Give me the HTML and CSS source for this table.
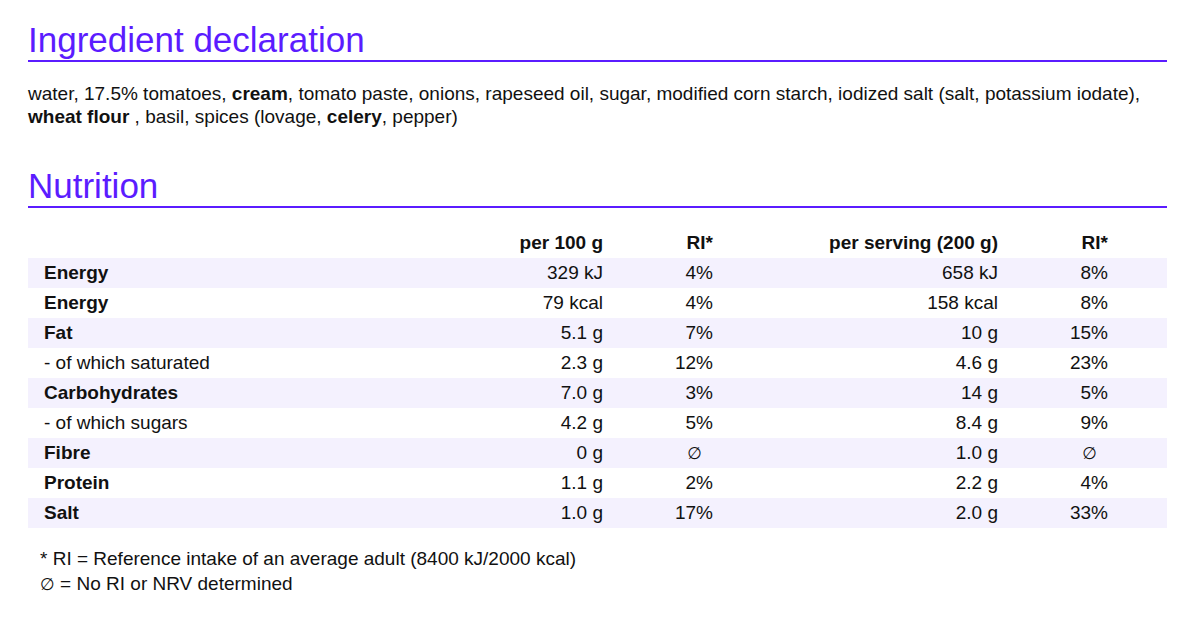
FILE: index.html
```html
<!DOCTYPE html>
<html lang="en">
<head>
<meta charset="utf-8">
<title>Product information</title>
<link rel="stylesheet" href="styles.css">
</head>
<body>
<main class="page">
  <section class="section">
    <h2 class="section-title">Ingredient declaration</h2>
    <p class="ingredients">water, 17.5% tomatoes, <b>cream</b>, tomato paste, onions, rapeseed oil, sugar, modified corn starch, iodized salt (salt, potassium iodate), <b>wheat flour</b> , basil, spices (lovage, <b>celery</b>, pepper)</p>
  </section>
  <section class="section">
    <h2 class="section-title">Nutrition</h2>
    <table class="nutrition">
      <colgroup>
        <col class="c-label">
        <col class="c-val">
        <col class="c-ri">
        <col class="c-val2">
        <col class="c-ri2">
      </colgroup>
      <thead>
        <tr><th></th><th>per 100 g</th><th>RI*</th><th>per serving (200 g)</th><th class="last">RI*</th></tr>
      </thead>
      <tbody>
        <tr class="main"><td>Energy</td><td>329 kJ</td><td>4%</td><td>658 kJ</td><td class="last">8%</td></tr>
        <tr class="main"><td>Energy</td><td>79 kcal</td><td>4%</td><td>158 kcal</td><td class="last">8%</td></tr>
        <tr class="main"><td>Fat</td><td>5.1 g</td><td>7%</td><td>10 g</td><td class="last">15%</td></tr>
        <tr><td>- of which saturated</td><td>2.3 g</td><td>12%</td><td>4.6 g</td><td class="last">23%</td></tr>
        <tr class="main"><td>Carbohydrates</td><td>7.0 g</td><td>3%</td><td>14 g</td><td class="last">5%</td></tr>
        <tr><td>- of which sugars</td><td>4.2 g</td><td>5%</td><td>8.4 g</td><td class="last">9%</td></tr>
        <tr class="main"><td>Fibre</td><td>0 g</td><td class="none"><span class="na">∅</span></td><td>1.0 g</td><td class="last none"><span class="na">∅</span></td></tr>
        <tr class="main"><td>Protein</td><td>1.1 g</td><td>2%</td><td>2.2 g</td><td class="last">4%</td></tr>
        <tr class="main"><td>Salt</td><td>1.0 g</td><td>17%</td><td>2.0 g</td><td class="last">33%</td></tr>
      </tbody>
    </table>
    <div class="footnotes">
      <p>* RI = Reference intake of an average adult (8400 kJ/2000 kcal)</p>
      <p><span class="na">∅</span> = No RI or NRV determined</p>
    </div>
  </section>
</main>
</body>
</html>
```
FILE: styles.css
```css
html, body {
  margin: 0;
  padding: 0;
  background: #ffffff;
}

body {
  font-family: "Liberation Sans", Arial, Helvetica, sans-serif;
  color: #111111;
  font-size: 19px;
}

.page {
  padding: 20px 33px 0 28px;
}

.section-title {
  margin: 0;
  font-size: 35px;
  font-weight: 400;
  line-height: 40px;
  color: #5b1cff;
  border-bottom: 2px solid #5b1cff;
}

.ingredients {
  margin: 20px 0 38px;
  line-height: 23px;
}

.nutrition {
  width: 100%;
  border-collapse: collapse;
  table-layout: fixed;
  margin-top: 20px;
}

.c-label { width: 402px; }
.c-val { width: 189px; }
.c-ri { width: 110px; }
.c-val2 { width: 285px; }
.c-ri2 { width: auto; }

.nutrition th,
.nutrition td {
  height: 30px;
  padding: 0 16px;
  text-align: right;
  vertical-align: middle;
  white-space: nowrap;
}

.nutrition th {
  font-weight: 700;
}

.nutrition td:first-child {
  text-align: left;
}

.nutrition .last {
  padding-right: 59px;
}

.nutrition .none {
  padding-right: 27px;
}

.nutrition .last.none {
  padding-right: 70px;
}

.na {
  font-family: "DejaVu Sans", sans-serif;
  font-size: 17px;
  line-height: 1;
}

.nutrition tr.main td:first-child {
  font-weight: 700;
}

.nutrition tbody tr:nth-child(odd) {
  background: #f4f1fe;
}

.footnotes {
  margin-top: 17.5px;
  padding-left: 12px;
}

.footnotes p {
  margin: 0;
  line-height: 25px;
}
```
